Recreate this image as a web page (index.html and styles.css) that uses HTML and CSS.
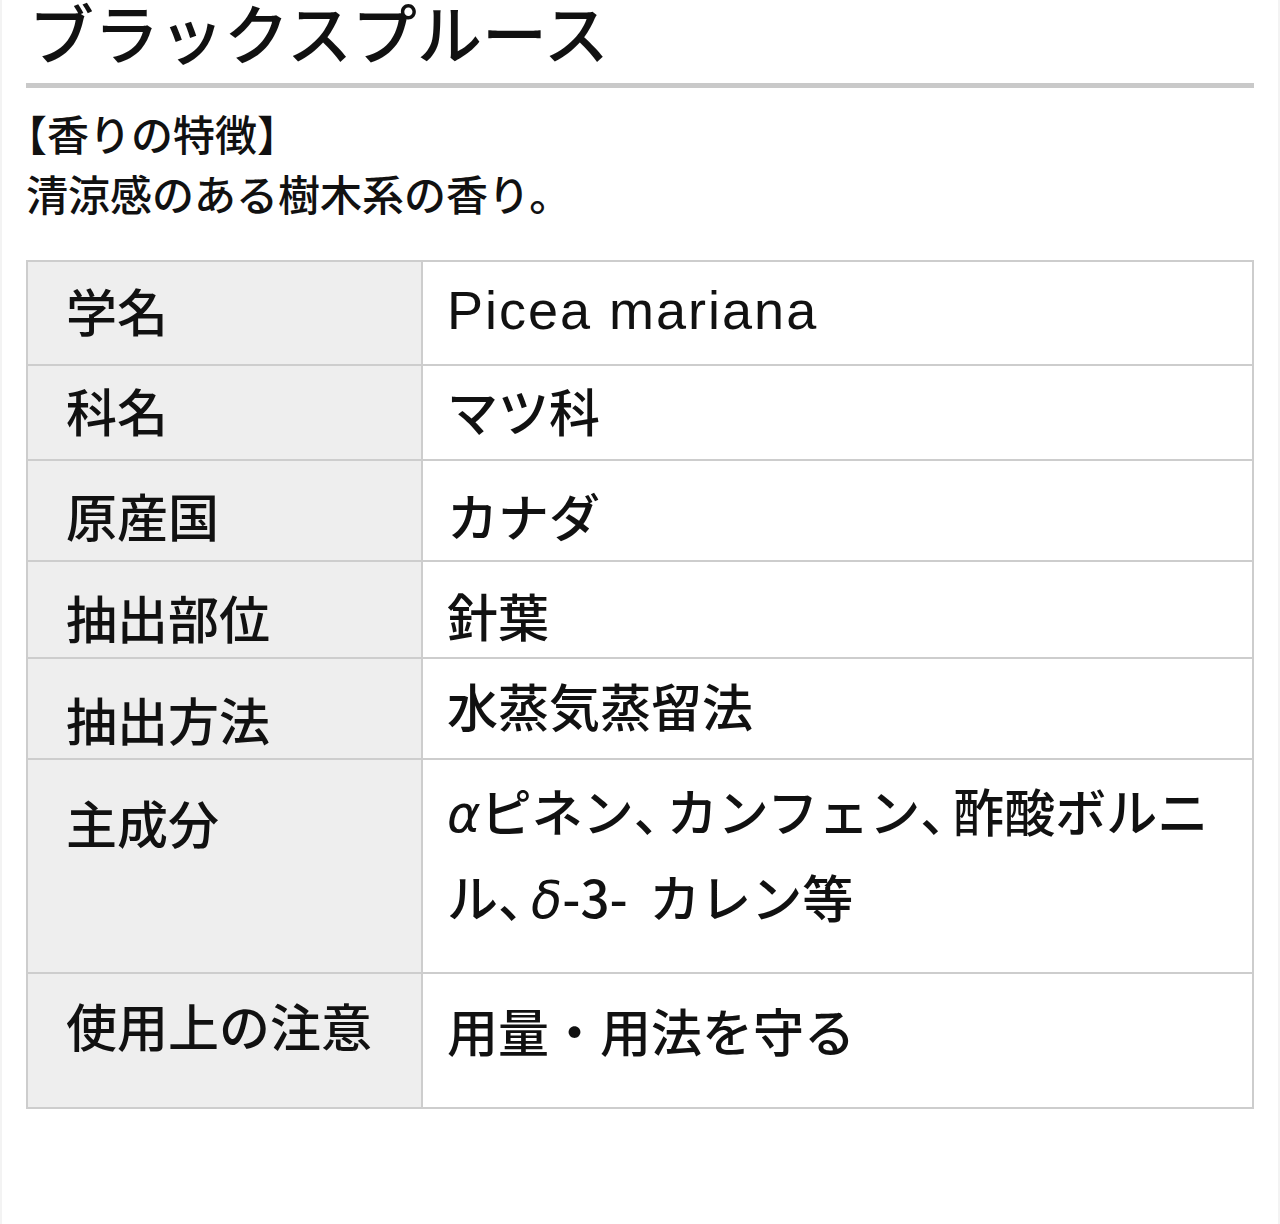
FILE: index.html
```html
<!DOCTYPE html>
<html lang="ja">
<head>
<meta charset="utf-8">
<title>ブラックスプルース</title>
<link rel="stylesheet" href="styles.css">
</head>
<body>
<div class="page">
  <h1 class="title">ブラックスプルース</h1>
  <p class="feature-head"><span class="bracket">【</span>香りの特徴<span class="bracket">】</span></p>
  <p class="feature-text">清涼感のある樹木系の香り。</p>

  <div class="spec">
    <div class="row r1">
      <div class="label">学名</div>
      <div class="value latin">Picea mariana</div>
    </div>
    <div class="row r2">
      <div class="label">科名</div>
      <div class="value">マツ科</div>
    </div>
    <div class="row r3">
      <div class="label">原産国</div>
      <div class="value">カナダ</div>
    </div>
    <div class="row r4">
      <div class="label">抽出部位</div>
      <div class="value">針葉</div>
    </div>
    <div class="row r5">
      <div class="label">抽出方法</div>
      <div class="value">水蒸気蒸留法</div>
    </div>
    <div class="row r6">
      <div class="label">主成分</div>
      <div class="value multi"><i class="greek">α</i>ピネン<span class="punc">、</span>カンフェン<span class="punc">、</span>酢酸ボルニ<br>ル<span class="punc">、</span><i class="greek">δ</i>-3- <span class="tail">カレン等</span></div>
    </div>
    <div class="row r7">
      <div class="label">使用上の注意</div>
      <div class="value">用量・用法を守る</div>
    </div>
  </div>
</div>
</body>
</html>
```

FILE: styles.css
```css
html, body {
  margin: 0;
  padding: 0;
  background: #ffffff;
}

body {
  font-family: "Noto Sans CJK JP", "Noto Sans", sans-serif;
  color: #111111;
  font-weight: 500;
}

.page {
  min-height: 1224px;
  box-sizing: border-box;
  padding: 0 24px 0 24px;
  border-left: 2px solid #f3f3f3;
  border-right: 2px solid #f3f3f3;
}

.title {
  margin: 0;
  font-size: 65px;
  font-weight: 500;
  line-height: 62px;
  padding: 0 0 21px 3px;
  border-bottom: 5px solid #c9c9c9;
}

.feature-head,
.feature-text {
  margin: 0;
  font-size: 42px;
  line-height: 60px;
}

.feature-head {
  margin-top: 15px;
}

.bracket {
  font-feature-settings: "halt";
}

.spec {
  margin-top: 37px;
  border-top: 2px solid #cdcdcd;
  border-left: 2px solid #cdcdcd;
}

.row {
  display: grid;
  grid-template-columns: 395px 1fr;
  box-sizing: border-box;
}

.label,
.value {
  font-size: 51px;
  line-height: 60px;
  box-sizing: border-box;
  border-right: 2px solid #cdcdcd;
  border-bottom: 2px solid #cdcdcd;
}

.label {
  background: #eeeeee;
  padding-left: 38px;
}

.value {
  background: #ffffff;
  padding-left: 24px;
  padding-right: 10px;
}

.latin {
  font-family: "Liberation Sans", "Noto Sans", sans-serif;
  font-size: 54px;
  font-weight: 400;
  letter-spacing: 2px;
}

.multi {
  line-height: 86px;
  white-space: nowrap;
}

.greek {
  font-family: "DejaVu Sans", sans-serif;
  font-style: italic;
  font-weight: 400;
  line-height: 0;
}

.punc {
  letter-spacing: -18px;
}

.tail {
  margin-left: 10px;
}

.r1 { height: 104px; }
.r2 { height: 95px; }
.r3 { height: 101px; }
.r4 { height: 97px; }
.r5 { height: 101px; }
.r6 { height: 214px; }
.r7 { height: 135px; }

.r1 .label { padding-top: 18px; }
.r1 .value { padding-top: 18px; }
.r2 .label, .r2 .value { padding-top: 14px; }
.r3 .label, .r3 .value { padding-top: 24px; }
.r4 .label { padding-top: 25px; }
.r4 .value { padding-top: 23px; }
.r5 .label { padding-top: 30px; }
.r5 .value { padding-top: 16px; }
.r6 .label { padding-top: 32px; }
.r6 .value { padding-top: 7px; }
.r7 .label { padding-top: 21px; }
.r7 .value { padding-top: 26px; }
```
